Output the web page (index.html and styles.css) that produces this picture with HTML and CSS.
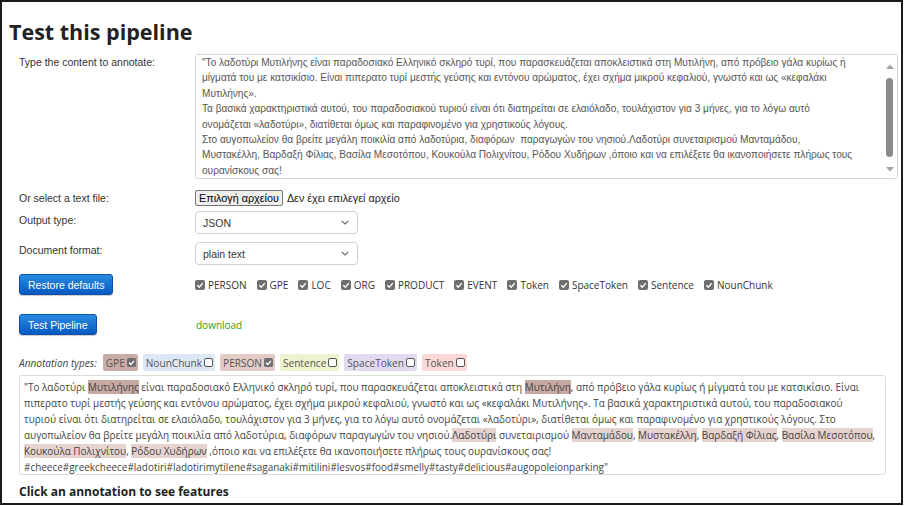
FILE: index.html
```html
<!DOCTYPE html>
<html lang="el">
<head>
<meta charset="utf-8">
<title>Test this pipeline</title>
<link rel="stylesheet" href="styles.css">
</head>
<body>
<div class="frame">
  <h1 class="title">Test this pipeline</h1>
  <div class="form">
    <div class="row row-text">
      <div class="label">Type the content to annotate:</div>
      <div class="textarea">
        <div class="ta-text">"Το λαδοτύρι Μυτιλήνης είναι παραδοσιακό Ελληνικό σκληρό τυρί, που παρασκευάζεται αποκλειστικά στη Μυτιλήνη, από πρόβειο γάλα κυρίως ή<br>μίγματά του με κατσικίσιο. Είναι πιπερατο τυρί μεστής γεύσης και εντόνου αρώματος, έχει σχήμα μικρού κεφαλιού, γνωστό και ως «κεφαλάκι<br>Μυτιλήνης».<br>Τα βασικά χαρακτηριστικά αυτού, του παραδοσιακού τυριού είναι ότι διατηρείται σε ελαιόλαδο, τουλάχιστον για 3 μήνες, για το λόγω αυτό<br>ονομάζεται «λαδοτύρι», διατίθεται όμως και παραφινομένο για χρηστικούς λόγους.<br>Στο αυγοπωλείον θα βρείτε μεγάλη ποικιλία από λαδοτύρια, διαφόρων &nbsp;παραγωγών του νησιού.Λαδοτύρι συνεταιρισμού Μανταμάδου,<br>Μυστακέλλη, Βαρδαξή Φίλιας, Βασίλα Μεσοτόπου, Κουκούλα Πολιχνίτου, Ρόδου Χυδήρων ,όποιο και να επιλέξετε θα ικανοποιήσετε πλήρως τους<br>ουρανίσκους σας!</div>
        <div class="scrollbar">
          <svg class="sb-arrow" viewBox="0 0 8 5" width="8" height="5"><path d="M0 5 L4 0.5 L8 5 Z" fill="#a3a3a3"/></svg>
          <div class="sb-thumb"></div>
          <svg class="sb-arrow" viewBox="0 0 8 5" width="8" height="5"><path d="M0 0 L4 4.5 L8 0 Z" fill="#a3a3a3"/></svg>
        </div>
      </div>
    </div>
    <div class="row row-file">
      <div class="label">Or select a text file:</div>
      <div class="file">
        <span class="file-btn">Επιλογή αρχείου</span>
        <span class="file-name">Δεν έχει επιλεγεί αρχείο</span>
      </div>
    </div>
    <div class="row row-select">
      <div class="label">Output type:</div>
      <div class="select"><span>JSON</span>
        <svg class="chev" viewBox="0 0 8 5" width="8" height="5"><path d="M0.7 0.8 L4 4 L7.3 0.8" fill="none" stroke="#666" stroke-width="1.1"/></svg>
      </div>
    </div>
    <div class="row row-select2">
      <div class="label">Document format:</div>
      <div class="select"><span>plain text</span>
        <svg class="chev" viewBox="0 0 8 5" width="8" height="5"><path d="M0.7 0.8 L4 4 L7.3 0.8" fill="none" stroke="#666" stroke-width="1.1"/></svg>
      </div>
    </div>
    <div class="row row-restore">
      <div class="label"><span class="btn">Restore defaults</span></div>
      <div class="checks">
        <label class="chk"><svg class="cb" viewBox="0 0 10 10"><rect width="10" height="10" rx="2" fill="#6f6f6f"/><path d="M2.3 5.2l2 2 3.5-4.1" stroke="#fff" stroke-width="1.4" fill="none"/></svg>PERSON</label>
        <label class="chk"><svg class="cb" viewBox="0 0 10 10"><rect width="10" height="10" rx="2" fill="#6f6f6f"/><path d="M2.3 5.2l2 2 3.5-4.1" stroke="#fff" stroke-width="1.4" fill="none"/></svg>GPE</label>
        <label class="chk"><svg class="cb" viewBox="0 0 10 10"><rect width="10" height="10" rx="2" fill="#6f6f6f"/><path d="M2.3 5.2l2 2 3.5-4.1" stroke="#fff" stroke-width="1.4" fill="none"/></svg>LOC</label>
        <label class="chk"><svg class="cb" viewBox="0 0 10 10"><rect width="10" height="10" rx="2" fill="#6f6f6f"/><path d="M2.3 5.2l2 2 3.5-4.1" stroke="#fff" stroke-width="1.4" fill="none"/></svg>ORG</label>
        <label class="chk"><svg class="cb" viewBox="0 0 10 10"><rect width="10" height="10" rx="2" fill="#6f6f6f"/><path d="M2.3 5.2l2 2 3.5-4.1" stroke="#fff" stroke-width="1.4" fill="none"/></svg>PRODUCT</label>
        <label class="chk"><svg class="cb" viewBox="0 0 10 10"><rect width="10" height="10" rx="2" fill="#6f6f6f"/><path d="M2.3 5.2l2 2 3.5-4.1" stroke="#fff" stroke-width="1.4" fill="none"/></svg>EVENT</label>
        <label class="chk"><svg class="cb" viewBox="0 0 10 10"><rect width="10" height="10" rx="2" fill="#6f6f6f"/><path d="M2.3 5.2l2 2 3.5-4.1" stroke="#fff" stroke-width="1.4" fill="none"/></svg>Token</label>
        <label class="chk"><svg class="cb" viewBox="0 0 10 10"><rect width="10" height="10" rx="2" fill="#6f6f6f"/><path d="M2.3 5.2l2 2 3.5-4.1" stroke="#fff" stroke-width="1.4" fill="none"/></svg>SpaceToken</label>
        <label class="chk"><svg class="cb" viewBox="0 0 10 10"><rect width="10" height="10" rx="2" fill="#6f6f6f"/><path d="M2.3 5.2l2 2 3.5-4.1" stroke="#fff" stroke-width="1.4" fill="none"/></svg>Sentence</label>
        <label class="chk"><svg class="cb" viewBox="0 0 10 10"><rect width="10" height="10" rx="2" fill="#6f6f6f"/><path d="M2.3 5.2l2 2 3.5-4.1" stroke="#fff" stroke-width="1.4" fill="none"/></svg>NounChunk</label>
      </div>
    </div>
    <div class="row row-test">
      <div class="label"><span class="btn">Test Pipeline</span></div>
      <a class="download">download</a>
    </div>
  </div>

  <div class="types">
    <span class="types-label">Annotation types:</span>
    <span class="chip chip-gpe">GPE<svg class="cb" viewBox="0 0 10 10"><rect width="10" height="10" rx="2" fill="#6f6f6f"/><path d="M2.3 5.2l2 2 3.5-4.1" stroke="#fff" stroke-width="1.4" fill="none"/></svg></span>
    <span class="chip chip-noun">NounChunk<span class="box"></span></span>
    <span class="chip chip-person">PERSON<svg class="cb" viewBox="0 0 10 10"><rect width="10" height="10" rx="2" fill="#6f6f6f"/><path d="M2.3 5.2l2 2 3.5-4.1" stroke="#fff" stroke-width="1.4" fill="none"/></svg></span>
    <span class="chip chip-sent">Sentence<span class="box"></span></span>
    <span class="chip chip-space">SpaceToken<span class="box"></span></span>
    <span class="chip chip-token">Token<span class="box"></span></span>
  </div>

  <div class="result">"Το λαδοτύρι <span class="hl-gpe">Μυτιλήνης</span> είναι παραδοσιακό Ελληνικό σκληρό τυρί, που παρασκευάζεται αποκλειστικά στη <span class="hl-gpe">Μυτιλήνη</span>, από πρόβειο γάλα κυρίως ή μίγματά του με κατσικίσιο. Είναι<br>πιπερατο τυρί μεστής γεύσης και εντόνου αρώματος, έχει σχήμα μικρού κεφαλιού, γνωστό και ως «κεφαλάκι Μυτιλήνης». Τα βασικά χαρακτηριστικά αυτού, του παραδοσιακού<br>τυριού είναι ότι διατηρείται σε ελαιόλαδο, τουλάχιστον για 3 μήνες, για το λόγω αυτό ονομάζεται «λαδοτύρι», διατίθεται όμως και παραφινομένο για χρηστικούς λόγους. Στο<br>αυγοπωλείον θα βρείτε μεγάλη ποικιλία από λαδοτύρια, διαφόρων παραγωγών του νησιού.<span class="hl-per">Λαδοτύρι</span> συνεταιρισμού <span class="hl-per">Μανταμάδου</span>, <span class="hl-per">Μυστακέλλη</span>, <span class="hl-per">Βαρδαξή Φίλιας</span>, <span class="hl-per">Βασίλα Μεσοτόπου</span>,<br><span class="hl-per">Κουκούλα Πολιχνίτου</span>, <span class="hl-per">Ρόδου Χυδήρων</span> ,όποιο και να επιλέξετε θα ικανοποιήσετε πλήρως τους ουρανίσκους σας!<br>#cheece#greekcheece#ladotiri#ladotirimytilene#saganaki#mitilini#lesvos#food#smelly#tasty#delicious#augopoleionparking"</div>

  <h2 class="features">Click an annotation to see features</h2>
</div>
</body>
</html>
```

FILE: styles.css
```css
html, body {
  margin: 0;
  padding: 0;
  background: #fff;
}

.frame {
  box-sizing: border-box;
  width: 903px;
  height: 505px;
  border: 2px solid #1b1b1b;
  padding: 0 3px 0 7px;
  overflow: hidden;
  font-family: "Liberation Sans", Arial, sans-serif;
  color: #333;
}

.title {
  margin: 15px 0 0 0;
  font-family: "Open Sans", sans-serif;
  font-weight: 700;
  font-size: 21.5px;
  line-height: 30px;
  color: #222;
}

.form {
  padding-left: 10px;
}

.row {
  display: flex;
  align-items: flex-start;
}

.label {
  width: 176px;
  flex: none;
  font-size: 10.5px;
  line-height: 14px;
  color: #333;
}

.row-text { margin-top: 7px; }
.row-text .label { padding-top: 1px; }

.textarea {
  position: relative;
  box-sizing: border-box;
  flex: 1;
  height: 125px;
  border: 1px solid #d6d6d6;
  border-radius: 3px;
  overflow: hidden;
}

.ta-text {
  padding: 0 18px 0 6px;
  font-size: 10.1px;
  line-height: 15.4px;
  color: #555;
  white-space: nowrap;
}

.scrollbar {
  position: absolute;
  top: 0;
  right: 0;
  bottom: 0;
  width: 15px;
  display: flex;
  flex-direction: column;
  align-items: center;
  padding: 9px 0 6px;
  box-sizing: border-box;
  background: #fff;
}
.sb-arrow { display: block; flex: none; }
.sb-thumb {
  width: 7px;
  height: 79px;
  margin: 9px 0 auto;
  border-radius: 4px;
  background: #8b8b8b;
}

.row-file { margin-top: 11px; align-items: center; }
.file { display: flex; align-items: center; font-size: 10.8px; color: #222; }
.file-btn {
  box-sizing: border-box;
  height: 16px;
  padding: 0 3px;
  display: flex;
  align-items: center;
  background: #efefef;
  border: 1px solid #767676;
  border-radius: 2px;
  color: #000;
}
.file-name { margin-left: 4px; }

.row-select { margin-top: 5px; }
.row-select .label { padding-top: 2px; }
.row-select2 { margin-top: 8px; }
.row-select2 .label { padding-top: 1px; }

.select {
  box-sizing: border-box;
  width: 163px;
  height: 23px;
  border: 1px solid #cfcfcf;
  border-radius: 4px;
  padding: 0 8px 0 7px;
  display: flex;
  align-items: center;
  justify-content: space-between;
  font-size: 10.5px;
  color: #333;
}
.chev { display: block; }

.row-restore { margin-top: 9px; align-items: center; }
.row-test { margin-top: 19px; align-items: center; }

.btn {
  display: inline-flex;
  align-items: center;
  box-sizing: border-box;
  height: 21px;
  padding: 0 8px;
  border: 1px solid #0b50a8;
  border-radius: 3px;
  background: linear-gradient(#2a8be0, #0459c2);
  color: #fff;
  font-size: 10.5px;
  box-shadow: 0 1px 1px rgba(0,0,0,0.2);
}

.checks {
  display: flex;
  align-items: center;
  gap: 10px;
  font-family: "Open Sans", sans-serif;
  font-size: 10px;
  color: #333;
}
.chk { display: inline-flex; align-items: center; gap: 3px; }
.cb { width: 10px; height: 10px; display: block; flex: none; }

.download {
  font-family: "Open Sans", sans-serif;
  font-size: 10px;
  color: #1aa51a;
  margin-left: 1px;
}

.types {
  margin: 19px 0 0 10px;
  display: flex;
  align-items: center;
  gap: 5px;
  font-family: "Open Sans", sans-serif;
  font-size: 10.1px;
  color: #555;
}
.types-label { font-style: italic; color: #444; margin-right: 1px; }
.chip {
  display: inline-flex;
  align-items: center;
  gap: 2px;
  height: 17px;
  padding: 0 2px 0 3px;
  border-radius: 2px;
}
.chip .cb, .chip .box { width: 9px; height: 9px; }
.box {
  box-sizing: border-box;
  display: block;
  border: 1px solid #555;
  border-radius: 2px;
  background: #fff;
}
.chip-gpe { background: #c9aca6; }
.chip-noun { background: #dce8f6; }
.chip-person { background: #e2cbc7; }
.chip-sent { background: #eef2cf; }
.chip-space { background: #e3daf0; }
.chip-token { background: #fdd8d8; }

.result {
  box-sizing: border-box;
  width: 867px;
  height: 100px;
  margin: 4px 0 0 10px;
  padding: 3px 4px;
  border: 1px solid #dcdcdc;
  border-radius: 3px;
  font-family: "Open Sans", sans-serif;
  font-size: 9.95px;
  line-height: 16px;
  color: #444;
  white-space: nowrap;
}
.hl-gpe { background: #c6a9a2; }
.hl-per { background: #e6d3cf; }

.features {
  margin: 9px 0 0 10px;
  font-family: "Open Sans", sans-serif;
  font-weight: 700;
  font-size: 12px;
  line-height: 16px;
  color: #222;
}
```
